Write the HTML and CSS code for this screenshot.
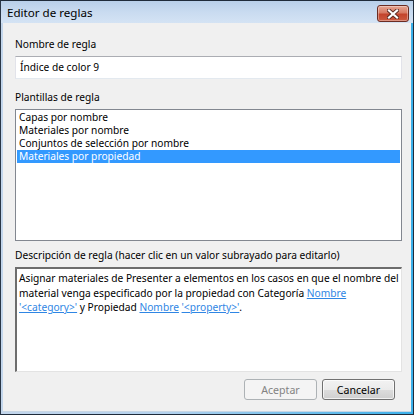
FILE: index.html
```html
<!DOCTYPE html>
<html lang="es">
<head>
<meta charset="utf-8">
<title>Editor de reglas</title>
<link rel="stylesheet" href="styles.css">
</head>
<body>
<div class="window">
  <div class="titlebar">
    <span class="title">Editor de reglas</span>
    <div class="close">
      <svg width="12" height="10" viewBox="0 0 12 10">
        <path d="M2 1.5 L10 8.5 M10 1.5 L2 8.5" stroke="#5a2a22" stroke-width="4" stroke-linecap="square"/>
        <path d="M2 1.5 L10 8.5 M10 1.5 L2 8.5" stroke="#ffffff" stroke-width="2.2" stroke-linecap="square"/>
      </svg>
    </div>
  </div>
  <div class="client">
    <div class="lbl">Nombre de regla</div>
    <div class="textbox">Índice de color 9</div>
    <div class="lbl lbl-gap">Plantillas de regla</div>
    <ul class="listbox">
      <li>Capas por nombre</li>
      <li>Materiales por nombre</li>
      <li>Conjuntos de selección por nombre</li>
      <li class="sel">Materiales por propiedad</li>
    </ul>
    <div class="lbl lbl-gap2">Descripción de regla (hacer clic en un valor subrayado para editarlo)</div>
    <div class="desc">Asignar materiales de Presenter a elementos en los casos en que el nombre del material venga especificado por la propiedad con Categoría <a class="lnk">Nombre</a> <a class="lnk">'&lt;category&gt;'</a> y Propiedad <a class="lnk">Nombre</a> <a class="lnk">'&lt;property&gt;'</a>.</div>
    <div class="buttons">
      <button class="btn" disabled>Aceptar</button>
      <button class="btn">Cancelar</button>
    </div>
  </div>
</div>
</body>
</html>
```

FILE: styles.css
```css
* { box-sizing: border-box; }
html, body { margin: 0; padding: 0; }
body {
  width: 414px;
  height: 415px;
  overflow: hidden;
  font-family: "Noto Sans", "Open Sans", sans-serif;
  font-size: 10.2px;
  color: #000;
}
.window {
  width: 414px;
  height: 415px;
  border: 1px solid #1f2b3a;
  background: linear-gradient(to right, #c3d6ec 0, #b4d2ee 40%, #3bb0ea 100%);
  display: flex;
  flex-direction: column;
  padding: 0 2px 2px 2px;
  border-left-color: #2a3646;
}
.titlebar {
  height: 23px;
  margin: 0 -2px;
  padding: 0 4px 0 6px;
  background: linear-gradient(#b8cfe9, #c9dbf0 50%, #d4e3f4);
  display: flex;
  align-items: center;
  justify-content: space-between;
}
.title {
  font-size: 11.6px;
  color: #000;
}
.close {
  width: 32px;
  height: 17px;
  margin-top: 4px;
  align-self: flex-start;
  border: 1px solid #6b2c22;
  border-radius: 3px;
  background: linear-gradient(#e6a592, #d77a63 45%, #c3442c 55%, #cc5a3f);
  box-shadow: inset 0 0 0 1px rgba(255,255,255,0.35);
  display: flex;
  align-items: center;
  justify-content: center;
}
.close svg { display: block; }
.client {
  flex: 1;
  background: #f0f0f0;
  padding: 14px 9px 11px 12px;
  display: flex;
  flex-direction: column;
  border-bottom: 1px solid #c8d6e4;
}
.lbl {
  line-height: 15px;
  height: 15px;
  white-space: nowrap;
}
.lbl-gap { margin-top: 11px; }
.lbl-gap2 { margin-top: 7px; }
.textbox {
  margin-top: 4px;
  height: 23px;
  background: #fff;
  border: 1px solid #e2e3ea;
  border-top-color: #abadb3;
  border-bottom-color: #e3e9ef;
  padding: 3px 4px;
  line-height: 15px;
}
.listbox {
  list-style: none;
  margin: 4px 0 0 0;
  padding: 1px 1px;
  height: 132px;
  background: #fff;
  border: 1px solid #828790;
}
.listbox li {
  height: 13px;
  line-height: 13px;
  padding-left: 2px;
  white-space: nowrap;
}
.listbox li.sel {
  background: #3399ff;
  color: #fff;
}
.desc {
  margin-top: 4px;
  height: 105px;
  background: #fff;
  border: 1px solid #a0a0a0;
  border-top: 2px solid #6d6d6d;
  border-left: 2px solid #6d6d6d;
  border-right-color: #e3e3e3;
  border-bottom-color: #e3e3e3;
  padding: 2px 1px 2px 2px;
  line-height: 14.5px;
}
.lnk {
  color: #2f86e4;
  text-decoration: underline;
}
.buttons {
  margin-top: 7px;
  display: flex;
  justify-content: flex-end;
  gap: 5px;
  padding-right: 7px;
}
.btn {
  width: 73px;
  height: 21px;
  font-family: inherit;
  font-size: 10.6px;
  color: #000;
  border: 1px solid #707070;
  border-radius: 3px;
  background: linear-gradient(#f2f2f2, #ebebeb 50%, #dddddd 51%, #cfcfcf);
  box-shadow: inset 0 0 0 1px rgba(255,255,255,0.7);
  padding: 0;
}
.btn:disabled {
  color: #838383;
  border-color: #adb2b5;
  background: #f4f4f4;
  box-shadow: none;
}
```
